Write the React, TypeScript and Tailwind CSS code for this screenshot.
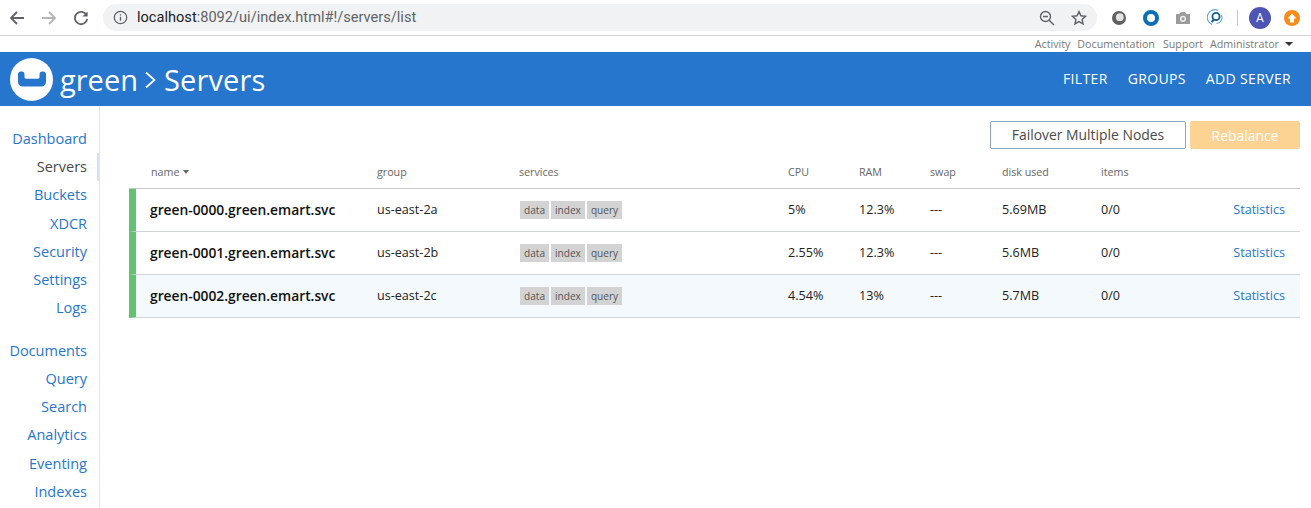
import React from "react";

const sans = "font-['Open_Sans',sans-serif]";
const gridCols = "grid grid-cols-[227px_142px_269px_71px_71px_72px_99px_1fr_auto] items-center";

const nav1: [string, boolean][] = [["Dashboard", false], ["Servers", true], ["Buckets", false], ["XDCR", false], ["Security", false], ["Settings", false], ["Logs", false]];
const nav2 = ["Documents", "Query", "Search", "Analytics", "Eventing", "Indexes"];

const rows = [
  { name: "green-0000.green.emart.svc", group: "us-east-2a", cpu: "5%", ram: "12.3%", disk: "5.69MB", hl: false },
  { name: "green-0001.green.emart.svc", group: "us-east-2b", cpu: "2.55%", ram: "12.3%", disk: "5.6MB", hl: false },
  { name: "green-0002.green.emart.svc", group: "us-east-2c", cpu: "4.54%", ram: "13%", disk: "5.7MB", hl: true },
];

function Toolbar() {
  return (
    <div className="h-[36px] border-b border-[#d6d6d6] flex items-center bg-white">
      <svg width="16" height="16" viewBox="0 0 16 16" className="ml-[9px]" fill="none" stroke="#5f6368" strokeWidth="1.8">
        <path d="M15 8H2M8 2 2 8l6 6" />
      </svg>
      <svg width="16" height="16" viewBox="0 0 16 16" className="ml-[16px]" fill="none" stroke="#b4b6b8" strokeWidth="1.8">
        <path d="M1 8h13M8 2l6 6-6 6" />
      </svg>
      <svg width="16" height="16" viewBox="0 0 16 16" className="ml-[16px]" fill="none" stroke="#5f6368" strokeWidth="1.8">
        <path d="M13.6 5.2A6.2 6.2 0 1 0 14.2 9" />
        <path d="M14.6 1.4v5.2H9.4z" fill="#5f6368" stroke="none" />
      </svg>
      <div className="ml-[14px] w-[994px] h-[27px] rounded-full bg-[#f0f2f3] flex items-center pl-[10px] pr-[10px] font-['Roboto',sans-serif] text-[14.6px]">
        <svg width="15" height="15" viewBox="0 0 15 15" fill="none" stroke="#5f6368" strokeWidth="1.3">
          <circle cx="7.5" cy="7.5" r="6.2" />
          <path d="M7.5 6.8v4M7.5 4.2v1.4" />
        </svg>
        <span className="ml-[9px] text-[#202124]">localhost</span>
        <span className="text-[#5f6368]">:8092/ui/index.html#!/servers/list</span>
        <svg width="16" height="16" viewBox="0 0 16 16" className="ml-auto" fill="none" stroke="#5f6368" strokeWidth="1.4">
          <circle cx="6.5" cy="6.5" r="5" />
          <path d="M4 6.5h5M10.2 10.2 15 15" />
        </svg>
        <svg width="16" height="16" viewBox="0 0 16 16" className="ml-[16px]" fill="none" stroke="#5f6368" strokeWidth="1.4">
          <path d="M8 1.6l1.9 4.2 4.6.5-3.4 3.1.9 4.5L8 11.6l-4 2.3.9-4.5L1.5 6.3l4.6-.5z" />
        </svg>
      </div>
      <svg width="14" height="14" viewBox="0 0 14 14" className="ml-[15px]">
        <circle cx="7" cy="7" r="7" fill="#606060" />
        <circle cx="7.800" cy="6.200" r="3.900" fill="#e2e2e2" />
      </svg>
      <div className="ml-[17px] w-[16px] h-[16px] rounded-full border-[4.5px] border-[#0a6fb5] bg-white" />
      <svg width="16" height="14" viewBox="0 0 16 14" className="ml-[16px]">
        <path d="M1 3h3.500L6 1h4l1.500 2H15v10H1z" fill="#9b9b9b" />
        <circle cx="8" cy="7.800" r="3.100" fill="#ececec" />
        <circle cx="8" cy="7.800" r="1.500" fill="#9b9b9b" />
      </svg>
      <svg width="17" height="17" viewBox="0 0 17 17" className="ml-[16px]" fill="none">
        <path d="M5 15.500A7.500 7.500 0 0 1 11 1.300" stroke="#5da3cf" strokeWidth="1.100" />
        <circle cx="9" cy="7.500" r="3.600" stroke="#0b5c97" strokeWidth="1.800" />
        <path d="M6.500 11 4.500 13" stroke="#0b5c97" strokeWidth="1.800" />
        <path d="M14.500 6a6 6 0 0 1-5 8.500" stroke="#5da3cf" strokeWidth="1.100" />
      </svg>
      <div className="ml-[13px] w-px h-[16px] bg-[#c8c8c8]" />
      <div className="ml-[11px] w-[22px] h-[22px] rounded-full bg-[#4e55b5] text-white flex items-center justify-center font-['Roboto',sans-serif] text-[12px]">A</div>
      <div className="ml-[13px] w-[16px] h-[16px] rounded-full bg-[#f98b16] flex items-center justify-center">
        <svg width="10" height="10" viewBox="0 0 10 10"><path d="M5 0.500 9.500 5.500H7V9.500H3V5.500H0.500z" fill="#fff" /></svg>
      </div>
    </div>
  );
}

function UtilityBar() {
  return (
    <div className={`h-[16px] flex items-center justify-end pr-[18px] text-[10.7px] text-[#7a7a7a] ${sans}`}>
      <span>Activity</span>
      <span className="ml-[7px]">Documentation</span>
      <span className="ml-[8px]">Support</span>
      <span className="ml-[7px]">Administrator</span>
      <span className="ml-[6px] w-0 h-0 border-x-[4px] border-x-transparent border-t-[4px] border-t-[#333]" />
    </div>
  );
}

function Header() {
  return (
    <div className={`h-[54px] bg-[#2776ce] flex items-center text-white ${sans}`}>
      <div className="ml-[10px] w-[43px] h-[43px] rounded-full bg-white flex items-center justify-center">
        <svg width="28" height="16" viewBox="0 0 28 16" fill="none">
          <path d="M0 3.500v7.500c0 2.500 2 4.500 4.500 4.500h19c2.500 0 4.500-2 4.500-4.500V3.500C28 1.800 26.900.5 25.200.5h-1C22.500.5 21.500 1.800 21.500 3.500v2.500c0 1-.6 1.700-1.600 1.700H8.100c-1 0-1.600-.7-1.600-1.700V3.500C6.500 1.800 5.500.5 3.800.5h-1C1.100.5 0 1.800 0 3.500z" fill="#2776ce" />
        </svg>
      </div>
      <div className="ml-[7px] text-[29px] leading-none flex items-center">
        <span>green</span>
        <svg width="13" height="20" viewBox="0 0 13 20" className="ml-[6px] mr-[7px] mt-[2px]" fill="none" stroke="#fff" strokeWidth="1.700"><path d="M2 2.500 10.500 10 2 17.500" /></svg>
        <span className="tracking-[0.15px]">Servers</span>
      </div>
      <div className="ml-auto pr-[20px] flex items-center gap-[20px] text-[14px] font-medium tracking-[0.35px] pb-[1px]">
        <span>FILTER</span>
        <span>GROUPS</span>
        <span>ADD SERVER</span>
      </div>
    </div>
  );
}

function Sidebar() {
  const item = "h-[28.2px] flex items-center justify-end pr-[12px] text-[14.5px] relative";
  return (
    <nav className={`w-[100px] h-[402px] border-r border-[#e6e6e6] pt-[18.9px] overflow-hidden shrink-0 ${sans}`}>
      {nav1.map(([n, active]) => (
        <div key={n} className={`${item} ${active ? "text-[#4a4a4a]" : "text-[#2776ce]"}`}>
          {n}
          {active && <span className="absolute right-[-1px] top-0 w-[3px] h-full bg-[#d3e2f4]" />}
        </div>
      ))}
      <div className="h-[14.4px]" />
      {nav2.map((n) => (
        <div key={n} className={`${item} text-[#2776ce]`}>{n}</div>
      ))}
    </nav>
  );
}

function Badge({ children }: { children: React.ReactNode }) {
  return <span className="h-[18px] px-[4px] flex items-center bg-[#d3d3d3] text-[10.1px] text-[#555] leading-none">{children}</span>;
}

function Main() {
  return (
    <main className={`flex-1 pl-[29px] pr-[11px] ${sans}`}>
      <div className="flex justify-end gap-[4px] pt-[15px] h-[43px]">
        <button className="w-[196px] h-[28px] border border-[#8da4bb] rounded-[2px] text-[13.9px] leading-[26px] text-[#4a4a4a] bg-white">Failover Multiple Nodes</button>
        <button className="w-[110px] h-[28px] rounded-[2px] text-[13.9px] leading-[27px] text-white bg-[#fdd394]">Rebalance</button>
      </div>
      <div className={`${gridCols} h-[40px] border-b border-[#c8c8c8] pl-[21px] pr-[15px] pt-[8px] text-[10.7px] text-[#666]`}>
        <span className="flex items-center gap-[4px] pl-[1px]">name<span className="w-0 h-0 border-x-[3.500px] border-x-transparent border-t-[4px] border-t-[#666]" /></span>
        <span>group</span>
        <span>services</span>
        <span>CPU</span>
        <span>RAM</span>
        <span>swap</span>
        <span>disk used</span>
        <span>items</span>
        <span />
      </div>
      {rows.map((r) => (
        <div key={r.name} className={`${gridCols} h-[43px] border-l-[7px] border-l-[#62c272] border-b border-b-[#d0d4d8] pl-[14px] pr-[15px] text-[12.6px] text-[#222] ${r.hl ? "bg-[#f4f9fd]" : "bg-white"}`}>
          <span className="text-[13.8px] font-semibold text-[#111]">{r.name}</span>
          <span>{r.group}</span>
          <span className="flex gap-[2px] pl-[1px]"><Badge>data</Badge><Badge>index</Badge><Badge>query</Badge></span>
          <span>{r.cpu}</span>
          <span>{r.ram}</span>
          <span>---</span>
          <span>{r.disk}</span>
          <span>0/0</span>
          <span className="text-[#2776ce]">Statistics</span>
        </div>
      ))}
    </main>
  );
}

export default function App() {
  return (
    <div className="w-[1311px] h-[508px] overflow-hidden bg-white">
      <Toolbar />
      <UtilityBar />
      <Header />
      <div className="flex">
        <Sidebar />
        <Main />
      </div>
    </div>
  );
}
